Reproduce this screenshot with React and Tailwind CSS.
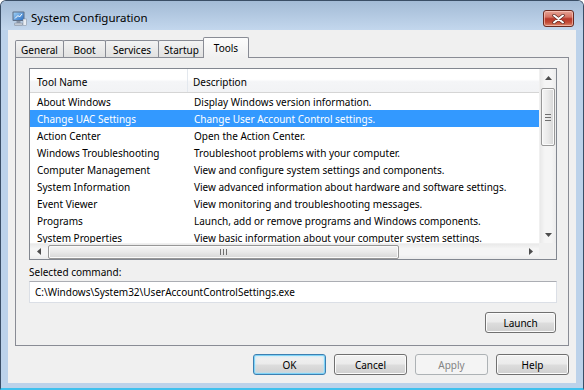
import React from "react"

const tools = [
  ["About Windows", "Display Windows version information."],
  ["Change UAC Settings", "Change User Account Control settings."],
  ["Action Center", "Open the Action Center."],
  ["Windows Troubleshooting", "Troubleshoot problems with your computer."],
  ["Computer Management", "View and configure system settings and components."],
  ["System Information", "View advanced information about hardware and software settings."],
  ["Event Viewer", "View monitoring and troubleshooting messages."],
  ["Programs", "Launch, add or remove programs and Windows components."],
  ["System Properties", "View basic information about your computer system settings."],
]

const tabs = [
  ["General", "w-[49px]"],
  ["Boot", "w-[43px]"],
  ["Services", "w-[54px]"],
  ["Startup", "w-[47px]"],
]

function Button({ children, kind, className = "" }) {
  let look = "border-[#707070] bg-[linear-gradient(#f2f2f2_0%,#ebebeb_48%,#dddddd_52%,#cfcfcf_100%)] shadow-[inset_0_0_0_1px_#fbfbfb] text-black"
  if (kind === "default") {
    look = "border-[#3c7fb1] bg-[linear-gradient(#f2f2f2_0%,#ebebeb_48%,#dddddd_52%,#cfcfcf_100%)] shadow-[inset_0_0_0_1px_#7fd3f7,inset_0_0_3px_1px_#b4e6fb] text-black"
  }
  if (kind === "disabled") {
    look = "border-[#adb2b5] bg-[#f4f4f4] text-[#838383]"
  }
  return (
    <div className={`h-[21px] flex items-center justify-center pt-[1px] rounded-[3px] border leading-none ${look} ${className}`}>
      {children}
    </div>
  )
}

function Arrow({ dir }) {
  const pts = {
    up: "0,4 3.5,0 7,4",
    down: "0,0 3.5,4 7,0",
    left: "4,0 0,3.5 4,7",
    right: "0,0 4,3.5 0,7",
  }[dir]
  const vertical = dir === "up" || dir === "down"
  return (
    <svg width={vertical ? 7 : 4} height={vertical ? 4 : 7}>
      <polygon points={pts} fill="#4d4d4d" />
    </svg>
  )
}

function TitleIcon() {
  return (
    <svg width="15" height="15" viewBox="0 0 15 15">
      <defs>
        <linearGradient id="scr" x1="0" y1="0" x2="1" y2="1">
          <stop offset="0" stopColor="#9fd0f5" />
          <stop offset="1" stopColor="#2b6fc4" />
        </linearGradient>
      </defs>
      <rect x="0.5" y="0.5" width="12" height="9.5" rx="1" fill="#5d6e86" />
      <rect x="1.5" y="1.5" width="10" height="7.5" fill="url(#scr)" />
      <path d="M3 7.5 L6 4.5 L7.5 6 L10 3" stroke="#ffffff" strokeWidth="1" fill="none" />
      <rect x="4.5" y="10" width="4" height="2" fill="#8894a6" />
      <rect x="2.5" y="12" width="8" height="2.5" rx="0.5" fill="#c3cad4" stroke="#7d8898" strokeWidth="0.5" />
      <rect x="11" y="8" width="3.5" height="6.5" fill="#e8edf3" stroke="#7d8898" strokeWidth="0.5" />
    </svg>
  )
}

export default function App() {
  return (
    <div className="w-[584px] h-[390px] overflow-hidden rounded-t-[6px] border-x border-t border-[#3a4e66] border-b-2 border-b-[#3fc1ee] bg-[#bcd2ea] font-['Noto_Sans',sans-serif] text-[10px] text-black">
      {/* title bar */}
      <div className="h-[29px] flex items-start pt-[9px] pl-[11px] bg-[linear-gradient(#a3bbd6,#c3d7ed)]">
        <div className="mt-[1px]"><TitleIcon /></div>
        <div className="ml-[4px] text-[11.5px] leading-[16px] text-black">System Configuration</div>
        <div className="ml-auto mr-[9px] w-[31px] h-[17px] rounded-[3px] border border-[#6a2a20] bg-[linear-gradient(#e6a496_0%,#d67464_40%,#b8382a_52%,#c24a36_75%,#dc8a70_100%)] shadow-[inset_0_0_0_1px_rgba(255,210,200,0.6)] flex items-center justify-center">
          <svg width="13" height="10" viewBox="0 0 13 10">
            <path d="M2 1.5 L11 8.5 M11 1.5 L2 8.5" stroke="#5a2a24" strokeWidth="3.4" strokeLinecap="round" />
            <path d="M2 1.5 L11 8.5 M11 1.5 L2 8.5" stroke="#ffffff" strokeWidth="2" strokeLinecap="round" />
          </svg>
        </div>
      </div>

      {/* client area */}
      <div className="mx-[7px] h-[353px] bg-[#f0f0f0] px-[7px] pt-[7px] flex flex-col">
        {/* tabs */}
        <div className="h-[21px] flex items-end">
          {tabs.map(([label, w], i) => (
            <div
              key={label}
              className={`${w} h-[18px] ${i > 0 ? "-ml-px" : ""} border-x border-t border-[#898c95] rounded-t-[2px] bg-[linear-gradient(#f3f3f3,#e0e0e0)] flex items-center justify-center leading-none pt-[1px]`}
            >
              {label}
            </div>
          ))}
          <div className="relative z-10 -ml-[2px] w-[46px] h-[21px] border-x border-t border-[#898c95] rounded-t-[2px] bg-[linear-gradient(#fcfcfc,#f0f0f0)] flex items-start justify-center pt-[5px] leading-none">
            Tools
          </div>
        </div>

        {/* tab page */}
        <div className="-mt-px w-[554px] h-[289px] border border-[#898c95] bg-[#f0f0f0] pl-[13px] pt-[10px] flex flex-col">
          {/* list view */}
          <div className="w-[528px] h-[192px] border border-[#828790] bg-white flex flex-col">
            <div className="h-[174px] flex">
              <div className="w-[509px] flex flex-col">
                <div className="h-[24px] flex border-b border-[#d5d5d5] bg-[linear-gradient(#ffffff_0%,#ffffff_45%,#f4f5f7_55%,#f2f3f5_100%)] leading-none">
                  <div className="w-[158px] pl-[7px] pt-[2px] flex items-center border-r border-[#e3e8ee]">Tool Name</div>
                  <div className="flex-1 pl-[5px] pt-[2px] flex items-center">Description</div>
                </div>
                <div className="h-[150px] overflow-hidden">
                  {tools.map(([name, desc], i) => (
                    <div
                      key={name}
                      className={`h-[17px] flex items-center pt-[2px] whitespace-nowrap ${i === 1 ? "bg-[#3399ff] text-white" : ""}`}
                    >
                      <div className="w-[158px] pl-[7px]">{name}</div>
                      <div className="pl-[6px]">{desc}</div>
                    </div>
                  ))}
                </div>
              </div>
              {/* vertical scrollbar */}
              <div className="w-[17px] flex flex-col items-center bg-[linear-gradient(90deg,#e9e9e9,#f5f5f5_30%,#f5f5f5_70%,#ececec)] border-l border-[#f0f0f0]">
                <div className="h-[17px] w-full flex items-center justify-center"><Arrow dir="up" /></div>
                <div className="mt-[2px] w-[14px] h-[58px] rounded-[2px] border border-[#979797] bg-[linear-gradient(90deg,#f5f5f5,#e9e9e9_50%,#d6d6d6)] shadow-[inset_0_0_0_1px_#fafafa] flex flex-col items-center justify-center gap-[2px]">
                  <div className="w-[6px] h-px bg-[#6f6f6f]" />
                  <div className="w-[6px] h-px bg-[#6f6f6f]" />
                  <div className="w-[6px] h-px bg-[#6f6f6f]" />
                </div>
                <div className="flex-1" />
                <div className="h-[17px] w-full flex items-center justify-center"><Arrow dir="down" /></div>
              </div>
            </div>
            {/* horizontal scrollbar */}
            <div className="h-[16px] flex">
              <div className="w-[509px] flex items-center bg-[linear-gradient(#e9e9e9,#f5f5f5_30%,#f5f5f5_70%,#ececec)] border-t border-[#f0f0f0]">
                <div className="w-[17px] h-full flex items-center justify-center"><Arrow dir="left" /></div>
                <div className="ml-[1px] w-[351px] h-[14px] rounded-[2px] border border-[#979797] bg-[linear-gradient(#f5f5f5,#e9e9e9_50%,#d6d6d6)] shadow-[inset_0_0_0_1px_#fafafa] flex items-center justify-center gap-[2px]">
                  <div className="w-px h-[6px] bg-[#6f6f6f]" />
                  <div className="w-px h-[6px] bg-[#6f6f6f]" />
                  <div className="w-px h-[6px] bg-[#6f6f6f]" />
                </div>
                <div className="flex-1" />
                <div className="w-[17px] h-full flex items-center justify-center"><Arrow dir="right" /></div>
              </div>
              <div className="w-[17px] bg-[#f0f0f0]" />
            </div>
          </div>

          <div className="mt-[5px] leading-[14px]">Selected command:</div>
          <div className="mt-[2px] w-[528px] h-[22px] border border-[#dbdfe6] border-t-[#abadb3] bg-white pl-[5px] flex items-center leading-none">
            C:\Windows\System32\UserAccountControlSettings.exe
          </div>
          <div className="mt-[9px] w-[527px] flex justify-end">
            <Button className="w-[71px]">Launch</Button>
          </div>
        </div>

        {/* dialog buttons */}
        <div className="mt-[8px] w-[554px] flex justify-end gap-[8px]">
          <Button kind="default" className="w-[73px]">OK</Button>
          <Button className="w-[73px]">Cancel</Button>
          <Button kind="disabled" className="w-[73px]">Apply</Button>
          <Button className="w-[73px]">Help</Button>
        </div>
      </div>
    </div>
  )
}
